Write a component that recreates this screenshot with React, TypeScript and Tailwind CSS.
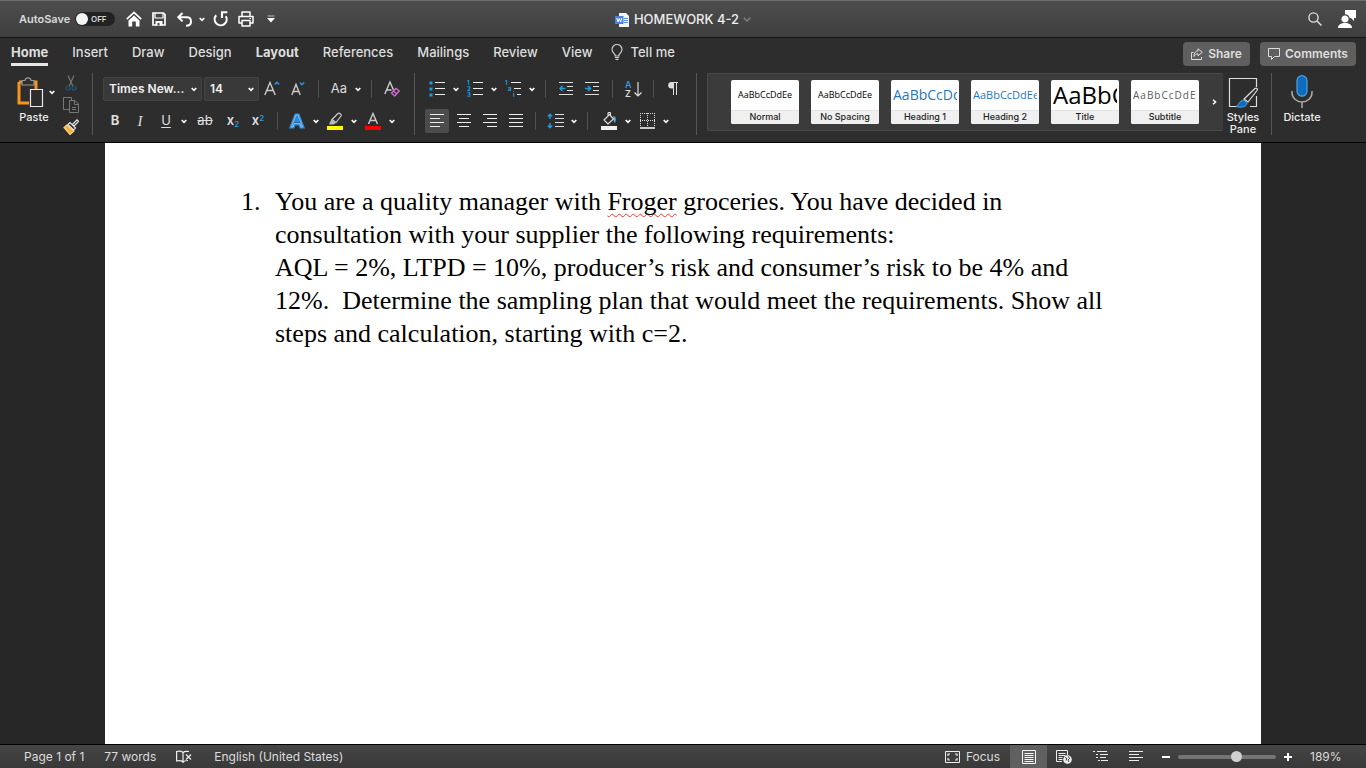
import type { ReactNode } from 'react';

type IconProps = { w: number; h: number; children: ReactNode; className?: string };

function Icon({ w, h, children, className = '' }: IconProps) {
  return (
    <svg
      width={w}
      height={h}
      viewBox={`0 0 ${w} ${h}`}
      fill="none"
      stroke="#e2e2e2"
      strokeWidth="1.2"
      aria-hidden="true"
      className={`block shrink-0 ${className}`}
    >
      {children}
    </svg>
  );
}

function Chevron() {
  return (
    <Icon w={6} h={5}>
      <path d="M0.7 1 3 3.4 5.3 1" stroke="#fff" strokeWidth="1.6" />
    </Icon>
  );
}

function Tool({ label, width = 'w-[26px]', active = false, children }: { label: string; width?: string; active?: boolean; children: ReactNode }) {
  return (
    <button
      type="button"
      aria-label={label}
      className={`flex h-8 shrink-0 items-center justify-center ${width}`}
    >
      {active ? (
        <span className="flex h-6 w-6 items-center justify-center rounded-xs bg-[#4c4c4c]">{children}</span>
      ) : (
        children
      )}
    </button>
  );
}

function More({ label }: { label: string }) {
  return (
    <button type="button" aria-label={label} className="flex h-8 w-[10px] shrink-0 items-center justify-center">
      <Chevron />
    </button>
  );
}

function Sep({ width }: { width: string }) {
  return (
    <div className={`flex shrink-0 justify-center ${width}`}>
      <div className="h-[18px] w-px bg-[#505050]" />
    </div>
  );
}

function GroupSep() {
  return <div className="h-[62px] w-px shrink-0 bg-[#555]" />;
}

function Lines({ rows }: { rows: [number, number][] }) {
  return (
    <Icon w={14} h={14}>
      {rows.map(([from, to], i) => (
        <path key={i} d={`M${from} ${0.5 + i * 4}H${to}`} stroke="#eee" strokeWidth="1" />
      ))}
    </Icon>
  );
}

function TitleBar() {
  return (
    <header className="grid h-[38px] grid-cols-[1fr_auto_1fr] items-center border-t border-b border-t-[#6d6d6d] border-b-[#141414] bg-linear-to-b from-[#4d4d4d] to-[#3f3f3f]">
      <div className="flex items-center pl-[19px]">
        <label className="flex items-center gap-[5px] text-[11px] font-semibold text-[#dadada]">
          <span className="w-[51px]">AutoSave</span>
          <span className="relative flex h-[14px] w-10 items-center rounded-full bg-[#222]">
            <input type="checkbox" role="switch" className="peer absolute inset-0 cursor-pointer opacity-0" />
            <span className="ml-px h-3 w-3 rounded-full bg-[#f4f4f4]" />
            <span className="ml-[3px] text-[8px] font-semibold">OFF</span>
          </span>
        </label>
        <button type="button" aria-label="Home" className="ml-[11px]">
          <Icon w={16} h={16}>
            <path d="M0.8 8.2 8 1.4l7.2 6.8" stroke="#fff" strokeWidth="1.7" />
            <path d="M2.5 9.5 8 4.6l5.5 4.9V15.5H9.8V10.5H6.2V15.5H2.5z" fill="#fff" stroke="none" />
          </Icon>
        </button>
        <button type="button" aria-label="Save" className="ml-[10px]">
          <Icon w={14} h={14}>
            <path d="M1 1h10.5L13 2.5V13H1z" stroke="#fff" strokeWidth="1.7" />
            <path d="M3 1v5h8V1" stroke="#fff" strokeWidth="1.2" />
            <path d="M3.5 9h7v4.5h-7z" fill="#fff" stroke="none" />
            <path d="M5.5 11h2v2.5h-2z" fill="#444" stroke="none" />
          </Icon>
        </button>
        <button type="button" aria-label="Undo" className="ml-[11px]">
          <Icon w={15} h={15}>
            <path d="M5.5 1 1.3 5.2l4.2 4.2M1.5 5.2h8.2c2.6 0 4.3 1.8 4.3 4.2 0 2.5-1.8 4.3-5 4.3" stroke="#fff" strokeWidth="2" />
          </Icon>
        </button>
        <button type="button" aria-label="Undo history" className="ml-[7px]">
          <Chevron />
        </button>
        <button type="button" aria-label="Repeat" className="ml-[8px]">
          <Icon w={16} h={16}>
            <path d="M3.2 4.3A6 6 0 1 0 12.8 5.2M8 1.2h6.300M9 1v6" stroke="#fff" strokeWidth="2.1" />
          </Icon>
        </button>
        <button type="button" aria-label="Print" className="ml-[9px]">
          <Icon w={16} h={16}>
            <path d="M4 5V1h8v4M4 12H1V5.5h14V12h-3M4 9.5h8V15H4z" stroke="#fff" strokeWidth="1.5" strokeLinejoin="round" />
            <path d="M11.5 7.5h1.5" stroke="#fff" />
          </Icon>
        </button>
        <button type="button" aria-label="Customize toolbar" className="ml-[13px]">
          <Icon w={8} h={8}>
            <path d="M0.5 1h7" stroke="#aaa" />
            <path d="M0 3h8L4 7.5z" fill="#fff" stroke="none" />
          </Icon>
        </button>
      </div>
      <button type="button" className="flex items-center pt-px text-[13px] font-medium text-[#ececec]">
        <Icon w={14} h={14}>
          <path d="M4 0h7l3 3v11H4z" fill="#f4f4f4" stroke="none" />
          <path d="M9 5.5h4M9 7.5h4M9 9.5h4" stroke="#5a8bd8" strokeWidth="1" />
          <path d="M0 3h8.5v8H0z" fill="#4a83db" stroke="none" />
          <path d="M1.8 5l1.2 4 1.3-3.5L5.6 9l1.2-4" stroke="#fff" strokeWidth="1" />
        </Icon>
        <span className="ml-[5px]">HOMEWORK 4-2</span>
        <Icon w={8} h={5} className="ml-1">
          <path d="M0.7 0.8 4 4l3.3-3.2" stroke="#8a8a8a" />
        </Icon>
      </button>
      <div className="flex items-center justify-end gap-4 pr-[10px]">
        <button type="button" aria-label="Search">
          <Icon w={14} h={14}>
            <circle cx="5.5" cy="5.5" r="4.6" stroke="#ddd" strokeWidth="1.4" />
            <path d="M9 9l4.5 4.5" stroke="#ddd" strokeWidth="1.5" />
          </Icon>
        </button>
        <button type="button" aria-label="Account">
          <Icon w={18} h={18}>
            <path d="M7 0h11v8h-2v3l-3-3H7z" fill="#fff" stroke="none" />
            <circle cx="7" cy="9" r="4.2" fill="#fff" stroke="#464646" />
            <path d="M0 18c0-3.5 3-5 7-5s7 1.5 7 5z" fill="#fff" stroke="none" />
          </Icon>
        </button>
      </div>
    </header>
  );
}

const tabs = ['Insert', 'Draw', 'Design', 'Layout', 'References', 'Mailings', 'Review', 'View'];

function Tabs() {
  return (
    <nav className="flex h-[35px] items-start text-[13px] leading-5 font-medium text-[#dedede]">
      <div className="flex gap-6 pt-1 pl-[11px]">
        <button type="button" className="h-6 border-b-3 border-[#e6e6e6] pb-px font-bold">Home</button>
        {tabs.map((tab) => (
          <button type="button" key={tab} className={tab === 'Layout' ? 'h-5 font-bold' : 'h-5'}>
            {tab}
          </button>
        ))}
      </div>
      <button type="button" className="ml-[18px] flex items-center gap-2 pt-1">
        <Icon w={12} h={16}>
          <path d="M4 12V10.5C3 9.5 1 8 1 5.5a5 5 0 0 1 10 0C11 8 9 9.5 8 10.5V12zM4 13.5h4M4.5 15.3h3" stroke="#ccc" />
        </Icon>
        Tell me
      </button>
      <div className="ml-auto flex gap-[10px] pt-1 pr-[10px] font-semibold">
        <button type="button" className="flex h-6 w-[67px] items-center justify-center gap-[5px] rounded-sm bg-[#5f5f5f]">
          <Icon w={12} h={12}>
            <path d="M2.5 4.5H0.5v7h10V9" stroke="#ddd" strokeWidth="1" />
            <path d="M7 0.8 11.3 4.3 7 7.8V5.8C5 5.8 4 6.5 3 8.5 3 5 4.5 3 7 2.8z" stroke="#ddd" strokeWidth="1" />
          </Icon>
          <span className="text-xs">Share</span>
        </button>
        <button type="button" className="flex h-6 w-24 items-center justify-center gap-[5px] rounded-sm bg-[#5f5f5f]">
          <Icon w={12} h={12}>
            <path d="M0.5 0.5h11v8H6.5L3.5 11.5v-3h-3z" stroke="#ddd" strokeWidth="1" />
          </Icon>
          <span className="text-xs">Comments</span>
        </button>
      </div>
    </nav>
  );
}

function Clipboard() {
  return (
    <div className="flex w-[92px] shrink-0 pl-4">
      <div className="w-[43px] pt-[3px]">
        <div className="flex items-center gap-[3px]">
          <button type="button" aria-label="Paste" className="shrink-0">
            <Icon w={28} h={30}>
              <path d="M3 5h17v9M3 5v21h10" stroke="#f7941d" strokeWidth="3" />
              <path d="M6 8V3.5h3C9.5 0 14.5 0 15 3.5h3V8z" fill="#2d2d2d" stroke="#999" />
              <path d="M14.5 12.5h12v17h-12z" fill="#2d2d2d" stroke="#e8e8e8" />
            </Icon>
          </button>
          <More label="Paste options" />
        </div>
        <div className="w-9 text-center text-[11px] leading-[18px] font-medium text-[#eee]">Paste</div>
      </div>
      <div className="flex flex-col items-center gap-[6px] pt-[2px] pl-1">
        <button type="button" aria-label="Cut">
          <Icon w={16} h={16}>
            <path d="M5 0.5 9.8 11M11 0.5 6.2 11" stroke="#777" />
            <circle cx="5" cy="13" r="2" stroke="#23587a" />
            <circle cx="11" cy="13" r="2" stroke="#23587a" />
          </Icon>
        </button>
        <button type="button" aria-label="Copy">
          <Icon w={16} h={16}>
            <path d="M6 12.5H0.5V0.5h8V3" stroke="#777" strokeWidth="1" />
            <path d="M6.5 3.5h5.5l3.5 3.5v8.5h-9zM11.5 3.5v4h4M9 10.5h4M9 12.5h4" stroke="#777" strokeWidth="1" />
          </Icon>
        </button>
        <button type="button" aria-label="Format painter">
          <Icon w={16} h={16}>
            <path d="M4 6 1 8.5 7 15.5 11 12z" fill="#f9b233" stroke="#f5d28a" />
            <path d="M5 5.5 7 3.5 12.5 9l-2 2zM9.5 5.5 14 0.8l1.5 1.5L11 7" fill="#2d2d2d" stroke="#e8e8e8" />
          </Icon>
        </button>
      </div>
    </div>
  );
}

function Picker({ label, value, width }: { label: string; value: string; width: string }) {
  return (
    <div className={`relative h-6 shrink-0 ${width}`}>
      <select
        aria-label={label}
        className="block h-6 w-full appearance-none rounded-xs border border-[#444] bg-[#393939] pb-px pl-[5px] text-xs font-semibold text-[#f0f0f0]"
      >
        <option>{value}</option>
      </select>
      <div className="pointer-events-none absolute inset-y-0 right-[5px] flex items-center">
        <Chevron />
      </div>
    </div>
  );
}

function FontGroup() {
  return (
    <div className="shrink-0 pr-[9px] pl-[10px] text-[#ddd]">
      <div className="flex h-8 items-center">
        <div className="flex gap-[2px]">
          <Picker label="Font" value="Times New..." width="w-[99px]" />
          <Picker label="Font size" value="14" width="w-[55px]" />
        </div>
        <Tool label="Increase font size">
          <Icon w={16} h={18}>
            <path d="M0.8 15 6 2.500l5.200 12.500M2.800 10.500h6.400" stroke="#ccc" strokeWidth="1.4" />
            <path d="M10.8 4.5 13 2.3l2.2 2.200" stroke="#1f9be0" strokeWidth="1.5" />
          </Icon>
        </Tool>
        <Tool label="Decrease font size">
          <Icon w={14} h={18}>
            <path d="M0.8 15 5 4.500l4.200 10.500M2.500 11.500h5" stroke="#ccc" strokeWidth="1.4" />
            <path d="M8.8 2.5 11 4.7l2.2-2.2" stroke="#1f9be0" strokeWidth="1.5" />
          </Icon>
        </Tool>
        <Sep width="w-[14px]" />
        <Tool label="Change case" width="w-7"><span className="text-[13px]">Aa</span></Tool>
        <More label="Case options" />
        <Sep width="w-4" />
        <Tool label="Clear formatting">
          <Icon w={16} h={18}>
            <path d="M0.800 14 6 2l3.500 8M3 10h4.500" stroke="#ccc" strokeWidth="1.4" />
            <path d="M7.500 13 12 8.500l3.2 2.5L10.7 16zM9.5 11l3.2 2.8" stroke="#d06bd0" strokeWidth="1.4" />
          </Icon>
        </Tool>
      </div>
      <div className="flex h-8 items-center">
        <Tool label="Bold" width="w-6"><b className="text-[13px]">B</b></Tool>
        <Tool label="Italic"><i className="font-['Liberation_Serif'] text-[15px]">I</i></Tool>
        <Tool label="Underline"><u className="text-[13px] underline-offset-2">U</u></Tool>
        <More label="Underline options" />
        <Tool label="Strikethrough" width="w-8"><s className="text-[13px]">ab</s></Tool>
        <Tool label="Subscript" width="w-6">
          <span className="text-[13px] font-semibold">x<sub className="text-[8px] text-[#1f9be0]">2</sub></span>
        </Tool>
        <Tool label="Superscript">
          <span className="text-[13px] font-semibold">x<sup className="text-[8px] text-[#1f9be0]">2</sup></span>
        </Tool>
        <Sep width="w-3" />
        <Tool label="Text effects" width="w-7">
          <Icon w={16} h={16}>
            <path d="M1.5 14.5 6.5 1.5h3l5 13h-3l-1-3h-5l-1 3zM6.5 8.500h3L8 4.5z" fill="#16476b" stroke="#2c8edb" strokeWidth="2.2" />
            <path d="M2.5 14 7 2h2l4.5 12h-1.500l-1-3.500h-6L4 14z" stroke="#b5d9f3" strokeWidth="0.7" />
          </Icon>
        </Tool>
        <More label="Text effect options" />
        <Tool label="Highlight" width="w-7">
          <Icon w={16} h={18}>
            <path d="M5 7.500 11 1.500c1-1 4 1 3 2.500L9 10.500z" stroke="#ccc" />
            <path d="M4.500 7 9 11 6.500 12.500H2z" fill="#bbb" stroke="none" />
            <path d="M0 14h16v4H0z" fill="#ffff00" stroke="none" />
          </Icon>
        </Tool>
        <More label="Highlight colors" />
        <Tool label="Font color" width="w-7">
          <Icon w={16} h={18}>
            <path d="M3.5 12 8 1.5 12.5 12M5 8.500h6" stroke="#ccc" strokeWidth="1.4" />
            <path d="M0 14h16v4H0z" fill="#ff0000" stroke="none" />
          </Icon>
        </Tool>
        <More label="Font colors" />
      </div>
    </div>
  );
}

function ParagraphGroup() {
  return (
    <div className="shrink-0 pr-[9px] pl-2">
      <div className="flex h-8 items-center">
        <Tool label="Bullets" width="w-7">
          <Icon w={16} h={16}>
            <path d="M0.500 0.500h3v3h-3zM0.500 6.500h3v3h-3zM0.500 12.500h3v3h-3z" fill="#1f9be0" stroke="none" />
            <path d="M6 1.500h10M6 7.500h10M6 13.500h10" stroke="#eee" strokeWidth="1" />
          </Icon>
        </Tool>
        <More label="Bullet options" />
        <Tool label="Numbering" width="w-7">
          <Icon w={16} h={18}>
            <g fill="#1f9be0" stroke="none" fontSize="6" fontWeight="700">
              <text x="0" y="5">1</text>
              <text x="0" y="11">2</text>
              <text x="0" y="17">3</text>
            </g>
            <path d="M6 2.500h10M6 8.500h10M6 14.500h10" stroke="#eee" strokeWidth="1" />
          </Icon>
        </Tool>
        <More label="Numbering options" />
        <Tool label="Multilevel list" width="w-7">
          <Icon w={16} h={18}>
            <g fill="#1f9be0" stroke="none" fontSize="6" fontWeight="700">
              <text x="0" y="5">1</text>
              <text x="3" y="11">a</text>
              <text x="8" y="17">i</text>
            </g>
            <path d="M6 2.500h10M9 8.500h7M12 14.500h4" stroke="#eee" strokeWidth="1" />
          </Icon>
        </Tool>
        <More label="Multilevel options" />
        <Sep width="w-4" />
        <Tool label="Decrease indent">
          <Icon w={14} h={14}>
            <path d="M0 0.5h14M8 4.5h6M8 8.5h6M0 12.5h14" stroke="#ddd" strokeWidth="1" />
            <path d="M6.5 6.5H1M3.5 4 1 6.5 3.5 9" stroke="#1f9be0" strokeWidth="1.5" />
          </Icon>
        </Tool>
        <Tool label="Increase indent">
          <Icon w={14} h={14}>
            <path d="M0 0.5h14M8 4.5h6M8 8.5h6M0 12.5h14" stroke="#ddd" strokeWidth="1" />
            <path d="M0 6.5h5.5M3 4l2.5 2.5L3 9" stroke="#1f9be0" strokeWidth="1.5" />
          </Icon>
        </Tool>
        <Sep width="w-[14px]" />
        <Tool label="Sort" width="w-7">
          <Icon w={17} h={18}>
            <g stroke="none" fontSize="9" fontWeight="600">
              <text x="0" y="8" fill="#1f9be0">A</text>
              <text x="0" y="17" fill="#ddd">Z</text>
            </g>
            <path d="M13 2v14M9.5 12.5 13 16l3.5-3.5" stroke="#ddd" />
          </Icon>
        </Tool>
        <Sep width="w-3" />
        <Tool label="Show formatting marks" width="w-7">
          <Icon w={10} h={14}>
            <path d="M3.5 0.5H10M5.5 0.5V13M8.5 0.5V13" stroke="#ddd" strokeWidth="1" />
            <path d="M5.5 0H3.5a3.300 3.300 0 0 0 0 6.600h2z" fill="#ddd" stroke="none" />
          </Icon>
        </Tool>
      </div>
      <div className="flex h-8 items-center">
        <Tool label="Align left" width="w-7" active><Lines rows={[[0, 14], [0, 10], [0, 14], [0, 10]]} /></Tool>
        <Tool label="Align center"><Lines rows={[[0, 14], [2, 12], [0, 14], [2, 12]]} /></Tool>
        <Tool label="Align right"><Lines rows={[[0, 14], [4, 14], [0, 14], [4, 14]]} /></Tool>
        <Tool label="Justify"><Lines rows={[[0, 14], [0, 14], [0, 14], [0, 14]]} /></Tool>
        <Sep width="w-3" />
        <Tool label="Line spacing" width="w-7">
          <Icon w={17} h={16}>
            <path d="M3 1v5M3 10v5M0.8 3.5 3 1.2l2.2 2.3M0.8 12.5 3 14.8l2.2-2.3" stroke="#1f9be0" strokeWidth="1.4" />
            <path d="M8 1.500h9M8 5.500h9M8 9.500h9M8 13.500h9" stroke="#ddd" strokeWidth="1" />
          </Icon>
        </Tool>
        <More label="Line spacing options" />
        <Sep width="w-4" />
        <Tool label="Shading" width="w-7">
          <Icon w={16} h={18}>
            <path d="M3 8 8.5 2.5 12.5 7 7 12zM7 5V1.5C7 0 9.5 0 9.5 1.5V4" stroke="#ddd" />
            <path d="M12 4c3 0 3.5 3 2 7-1-1-1.500-2-1.200-4z" fill="#6aaede" stroke="none" />
            <path d="M0 14h16v4H0z" fill="#f2f2f2" stroke="none" />
          </Icon>
        </Tool>
        <More label="Shading colors" />
        <Tool label="Borders" width="w-7">
          <Icon w={15} h={16}>
            <path d="M0 0.5h15M0 7.5h15M0.5 0v14M7.5 0v14M14.5 0v14" stroke="#ddd" strokeWidth="1" strokeDasharray="1 1" />
            <path d="M0 15h15" stroke="#fff" strokeWidth="1.5" />
          </Icon>
        </Tool>
        <More label="Border options" />
      </div>
    </div>
  );
}

const styles = [
  { name: 'Normal', look: 'text-[9px] font-medium text-black justify-center' },
  { name: 'No Spacing', look: 'text-[9px] font-medium text-black justify-center' },
  { name: 'Heading 1', look: 'text-sm text-[#1f77bd]' },
  { name: 'Heading 2', look: 'text-[11px] text-[#1f77bd]' },
  { name: 'Title', look: 'text-2xl text-black' },
  { name: 'Subtitle', look: 'text-[10px] tracking-widest text-[#5a5a5a]' },
];

function StyleGallery() {
  return (
    <div className="ml-[10px] flex h-[58px] shrink-0 items-center rounded-xs border border-r-0 border-[#4a4a4a] bg-[#3b3b3b] pl-[23px]">
      <div className="flex gap-3">
        {styles.map((style) => (
          <button type="button" key={style.name} className="flex h-11 w-[68px] flex-col overflow-hidden rounded-xs bg-white px-[2px]">
            <span className={`flex h-[30px] w-full items-center overflow-hidden font-['Open_Sans'] whitespace-nowrap ${style.look}`}>
              AaBbCcDdEe
            </span>
            <span className="-mx-[2px] h-[14px] w-[68px] border-t border-[#e2e2e2] bg-[#f0f0f0] text-center text-[9px] leading-[11px] font-medium text-[#222]">
              {style.name}
            </span>
          </button>
        ))}
      </div>
      <button type="button" aria-label="More styles" className="flex h-full w-6 items-center justify-center pl-[6px]">
        <Icon w={5} h={6}>
          <path d="M1 0.7 3.6 3 1 5.3" stroke="#fff" strokeWidth="1.5" />
        </Icon>
      </button>
    </div>
  );
}

function Ribbon() {
  return (
    <div className="flex h-[70px] items-start border-b border-black">
      <Clipboard />
      <GroupSep />
      <FontGroup />
      <GroupSep />
      <ParagraphGroup />
      <GroupSep />
      <StyleGallery />
      <button type="button" className="mr-2 flex w-10 shrink-0 flex-col items-center gap-[3px] pt-1 text-[11px] leading-3 font-medium text-[#eee]">
        <Icon w={30} h={31}>
          <path d="M10 29.500H1.500V1.500h27V10M28.500 19v10.500H22" stroke="#ddd" />
          <path d="M16 22 27 11.500c1.500-1 3 0 2 2L20 25z" fill="#2d2d2d" stroke="#ddd" />
          <path d="M8 29.500c3-1 3-6 8-6.500l3 3c0 4-6 5-11 3.500z" fill="#0f6cbd" stroke="#4aa3e6" strokeWidth="1" />
        </Icon>
        <span>Styles<br />Pane</span>
      </button>
      <GroupSep />
      <button type="button" className="flex w-[60px] shrink-0 flex-col items-center gap-[3px] pt-[2px] text-[11px] leading-3 font-medium text-[#eee]">
        <Icon w={22} h={33}>
          <path d="M1 16v1.500a10 9.500 0 0 0 20 0V16M11 27v6" stroke="#aaa" strokeWidth="1.5" />
          <rect x="6" y="0.7" width="10" height="20.5" rx="5" fill="#0f6cbd" stroke="#4aa3e6" />
        </Icon>
        Dictate
      </button>
    </div>
  );
}

function Document() {
  return (
    <main className="flex min-h-0 flex-1 justify-center bg-[#272727]">
      <article className="w-full max-w-[1156px] bg-white pt-[42px] pr-[140px] pl-[136px] font-['Liberation_Serif'] text-[26px] leading-[33px] text-black">
        <div className="flex">
          <span className="w-[34px] shrink-0">1.</span>
          <p className="whitespace-pre">
            You are a quality manager with{' '}
            <span className="underline decoration-[#e03c31] decoration-wavy decoration-1 underline-offset-3 [text-decoration-skip-ink:none]">Froger</span>
            {' '}groceries. You have decided in<br />
            consultation with your supplier the following requirements:<br />
            AQL = 2%, LTPD = 10%, producer’s risk and consumer’s risk to be 4% and<br />
            {'12%.  Determine the sampling plan that would meet the requirements. Show all'}<br />
            steps and calculation, starting with c=2.
          </p>
        </div>
      </article>
    </main>
  );
}

function StatusBar() {
  return (
    <footer className="flex h-6 shrink-0 items-center border-t border-black bg-linear-to-b from-[#454545] to-[#393939] text-xs text-[#dcdcdc]">
      <div className="flex items-center pl-6">
        <span>Page 1 of 1</span>
        <span className="ml-5">77 words</span>
        <button type="button" aria-label="Proofing" className="ml-5">
          <Icon w={16} h={14}>
            <path d="M7 2.5C5.5 1 3 1 0.6 1.500v9.500C3 10.5 5.5 10.5 7 12c1.500-1.500 3-1.500 5-1.500M7 2.500V13M7 2.500C8.500 1 10 1 13 1.500" stroke="#eee" />
            <path d="M10 4.500l5 5M15 4.500l-5 5" stroke="#eee" />
          </Icon>
        </button>
        <button type="button" className="ml-[22px]">English (United States)</button>
      </div>
      <div className="ml-auto flex h-full items-center pr-6">
        <button type="button" className="flex items-center gap-[6px]">
          <Icon w={15} h={12}>
            <path d="M0.5 0.5h14v11h-14z" stroke="#eee" strokeWidth="1" />
            <path d="M5 3H3v2M10 3h2v2M3 7v2h2M12 7v2h-2" stroke="#eee" />
          </Icon>
          Focus
        </button>
        <button type="button" aria-label="Print layout" className="ml-[10px] flex h-full w-[37px] items-center justify-center bg-[#606060]">
          <Icon w={14} h={14}>
            <path d="M0.5 0.5h13v13h-13zM2.5 3.5h9M2.5 5.5h9M2.5 7.5h9M2.5 9.5h9M2.5 11.5h9" stroke="#f4f4f4" strokeWidth="1" />
          </Icon>
        </button>
        <button type="button" aria-label="Web layout" className="ml-[9px]">
          <Icon w={16} h={14}>
            <path d="M6 11.5H0.5V0.5h11V5M2.5 3.5h7M2.5 5.5h7M2.5 7.5h4M2.5 9.5h4" stroke="#eee" strokeWidth="1" />
            <circle cx="11.5" cy="9.5" r="4.3" fill="#eee" stroke="none" />
            <path d="M9 7.5l2 1-1 2M12.5 6.5l1 2-1.500 1.500 1 2" stroke="#444" strokeWidth="1" />
          </Icon>
        </button>
        <button type="button" aria-label="Outline" className="ml-[21px]">
          <Icon w={15} h={11}>
            <path d="M0 0.5h2M4 0.5h10M3 3.5h2M7 3.5h8M3 6.5h2M7 6.5h6M5 9.5h2M8 9.5h7" stroke="#eee" strokeWidth="1" />
          </Icon>
        </button>
        <button type="button" aria-label="Draft" className="ml-[21px]">
          <Icon w={14} h={11}>
            <path d="M0 0.5h14M0 3.5h10M0 6.5h14M0 9.5h10" stroke="#eee" strokeWidth="1" />
          </Icon>
        </button>
        <button type="button" aria-label="Zoom out" className="ml-[19px]">
          <Icon w={8} h={8}><path d="M0 4h8" stroke="#fff" strokeWidth="2" /></Icon>
        </button>
        <input
          type="range"
          aria-label="Zoom"
          min={0}
          max={100}
          defaultValue={61}
          className="mx-2 h-1 w-[98px] appearance-none rounded-full bg-[#747474] [&::-webkit-slider-thumb]:h-[11px] [&::-webkit-slider-thumb]:w-[11px] [&::-webkit-slider-thumb]:appearance-none [&::-webkit-slider-thumb]:rounded-full [&::-webkit-slider-thumb]:bg-[#d0d0d0]"
        />
        <button type="button" aria-label="Zoom in">
          <Icon w={8} h={8}><path d="M0 4h8M4 0v8" stroke="#fff" strokeWidth="2" /></Icon>
        </button>
        <span className="ml-[18px] w-8">189%</span>
      </div>
    </footer>
  );
}

export default function App() {
  return (
    <div className="flex h-screen flex-col overflow-hidden bg-[#2d2d2d] font-['Inter',sans-serif]">
      <TitleBar />
      <Tabs />
      <Ribbon />
      <Document />
      <StatusBar />
    </div>
  );
}
